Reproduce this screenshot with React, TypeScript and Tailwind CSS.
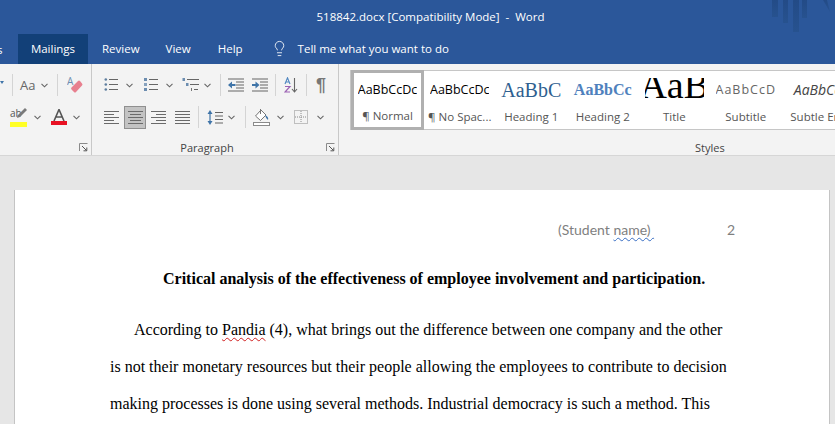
import { Lightbulb } from 'lucide-react';

const ui = "font-['Open_Sans','Noto_Sans',sans-serif]";

function Chev({ className = '' }: { className?: string }) {
  return (
    <svg width="7" height="5" viewBox="0 0 7 5" className={className}>
      <path d="M0.5 0.8 L3.5 3.8 L6.5 0.8" fill="none" stroke="#666" strokeWidth="1.1" />
    </svg>
  );
}

function Sep({ className = '' }: { className?: string }) {
  return <div className={`h-[22px] w-px bg-[#d4d4d4] ${className}`} />;
}

function Launcher({ className = '' }: { className?: string }) {
  return (
    <svg width="9" height="9" viewBox="0 0 9 9" className={className}>
      <path d="M0.5 8 V0.5 H8.5" fill="none" stroke="#8a8a8a" />
      <path d="M3 3 L7.5 7.5 M7.8 4.5 V7.8 H4.5" fill="none" stroke="#555" />
    </svg>
  );
}

function Lines({ rows }: { rows: [number, number][] }) {
  return (
    <svg width="15" height="14" viewBox="0 0 15 14">
      {rows.map(([x, w], i) => (
        <rect key={i} x={x} y={1 + i * 3} width={w} height="1" fill="#6a6a6a" />
      ))}
    </svg>
  );
}

function Bullets() {
  return (
    <svg width="14" height="14" viewBox="0 0 14 14">
      {[1.5, 6.5, 11.5].map((y) => (
        <g key={y}>
          <circle cx="1.8" cy={y} r="1.3" fill="#5f7f9f" />
          <rect x="5" y={y - 0.5} width="9" height="1" fill="#666" />
        </g>
      ))}
    </svg>
  );
}

function Numbering() {
  return (
    <svg width="15" height="14" viewBox="0 0 15 14">
      {[1.5, 6.5, 11.5].map((y, i) => (
        <g key={y}>
          <rect x="1" y={y - 1.5} width="3" height="3" fill="#6c8db0" opacity={i === 1 ? 0.8 : 1} />
          <rect x="6" y={y - 0.5} width="9" height="1" fill="#666" />
        </g>
      ))}
    </svg>
  );
}

function Multilevel() {
  return (
    <svg width="17" height="14" viewBox="0 0 17 14">
      <rect x="0.5" y="0" width="2.5" height="3" fill="#6c8db0" />
      <rect x="5" y="1" width="12" height="1" fill="#666" />
      <rect x="4" y="5" width="2.5" height="3" fill="#6c8db0" />
      <rect x="8" y="6" width="9" height="1" fill="#666" />
      <rect x="9" y="10" width="1" height="3" fill="#777" />
      <rect x="12" y="11" width="4" height="1" fill="#666" />
    </svg>
  );
}

function IndentIcon({ flip }: { flip?: boolean }) {
  return (
    <svg width="16" height="14" viewBox="0 0 16 14">
      {[0, 3, 6, 9, 12].map((y, i) => (
        <rect key={y} x={i === 0 || i === 4 ? 0 : 8} y={y + 0.5} width={i === 0 || i === 4 ? 16 : 8} height="1" fill="#666" />
      ))}
      {flip ? (
        <path d="M0 6 H3.5 V3.5 L7.5 7 L3.5 10.5 V8 H0 Z" fill="#3f74a8" />
      ) : (
        <path d="M7.5 6 H4 V3.5 L0 7 L4 10.5 V8 H7.5 Z" fill="#3f74a8" />
      )}
    </svg>
  );
}

function SortIcon() {
  return (
    <svg width="14" height="16" viewBox="0 0 14 16">
      <path d="M1 7 L3.5 0.8 L6 7 M2 5 H5" fill="none" stroke="#4f86c0" strokeWidth="1.1" />
      <path d="M1 9.5 H6 L1 15 H6" fill="none" stroke="#9c62b3" strokeWidth="1.2" />
      <path d="M10.5 1 V14.5 M8 12 L10.5 15 L13 12" fill="none" stroke="#666" strokeWidth="1.1" />
    </svg>
  );
}

function LineSpacing() {
  return (
    <svg width="16" height="17" viewBox="0 0 16 17">
      <path d="M3 1 L0.5 5 H5.5 Z M3 16 L0.5 12 H5.5 Z" fill="#3f74a8" />
      <rect x="2.4" y="4" width="1.2" height="9" fill="#3f74a8" />
      {[3, 6.5, 10, 13.5].map((y) => (
        <rect key={y} x="8" y={y} width="8" height="1" fill="#666" />
      ))}
    </svg>
  );
}

function Shading() {
  return (
    <svg width="17" height="17" viewBox="0 0 17 17">
      <path d="M8 1 L13 6 L7.5 11.5 L2.5 7 Z" fill="#fff" stroke="#777" />
      <path d="M7.5 0 V5" stroke="#777" />
      <path d="M12 6 Q16 8 15 11 Q13 10 12 6 Z" fill="#3f74a8" />
      <rect x="0.5" y="13.5" width="16" height="3" fill="#fff" stroke="#8a8a8a" />
    </svg>
  );
}

function Borders() {
  return (
    <svg width="14" height="14" viewBox="0 0 14 14">
      <rect x="0.5" y="0.5" width="13" height="13" fill="none" stroke="#8a8a8a" strokeDasharray="1 1" />
      <path d="M7 1 V13 M1 7 H13" stroke="#8a8a8a" strokeDasharray="1 1" />
    </svg>
  );
}

function Eraser() {
  return (
    <svg width="16" height="18" viewBox="0 0 16 18">
      <text x="0" y="9" fontSize="10" fill="#6c8db0" fontFamily="Open Sans">A</text>
      <path d="M4 12 L11 5 Q12 4 13 5 L15 7.5 Q16 8.5 15 9.5 L9 16 Q8 17 7 16 L4.5 13.5 Z" fill="#e8808f" />
    </svg>
  );
}

function Highlighter() {
  return (
    <div className="relative h-[22px] w-[18px]">
      <span className={`absolute left-0 top-[2px] text-[10px] leading-none text-[#555] ${ui}`}>ab</span>
      <svg width="12" height="12" viewBox="0 0 12 12" className="absolute left-[6px] top-[1px]">
        <path d="M1 11 L2 8 L9 1 L11 3 L4 10 Z" fill="#7a7a7a" />
      </svg>
      <div className="absolute bottom-[1px] left-0 h-[5px] w-[17px] bg-[#ffff26]" />
    </div>
  );
}

function FontColor() {
  return (
    <div className="flex h-[22px] w-4 flex-col items-center">
      <svg width="12" height="12" viewBox="0 0 12 12" className="mt-[3px]">
        <path d="M1 12 L6 0.5 L11 12 M3 8 H9" fill="none" stroke="#555" strokeWidth="1.6" />
      </svg>
      <div className="h-[4px] w-4 bg-[#e81123]" />
    </div>
  );
}

function FontGroup() {
  return (
    <div className="relative h-full w-[92px] shrink-0 overflow-hidden border-r border-[#c8c8c8]">
      <div className="flex h-[38px] items-center pt-[4px]">
        <svg width="4" height="3" viewBox="0 0 4 3" className="mb-[6px]">
          <path d="M0 0 H4 L2 3 Z" fill="#3f74a8" />
        </svg>
        <Sep className="ml-[8px]" />
        <span className={`ml-[7px] text-[13px] leading-none text-[#666] ${ui}`}>Aa</span>
        <Chev className="ml-[6px]" />
        <Sep className="ml-[9px]" />
        <div className="ml-[9px]">
          <Eraser />
        </div>
      </div>
      <div className="flex h-[28px] items-center pl-[10px] pt-[2px]">
        <Highlighter />
        <Chev className="ml-[6px]" />
        <div className="ml-[10px]">
          <FontColor />
        </div>
        <Chev className="ml-[6px]" />
      </div>
      <Launcher className="absolute bottom-[3px] right-[3px]" />
    </div>
  );
}

function ParagraphGroup() {
  return (
    <div className="relative flex h-full w-[247px] shrink-0 flex-col border-r border-[#c8c8c8] pl-[12px]">
      <div className="flex h-[38px] items-center pt-[4px]">
        <Bullets />
        <Chev className="ml-[8px]" />
        <div className="ml-[10px]">
          <Numbering />
        </div>
        <Chev className="ml-[8px]" />
        <div className="ml-[9px]">
          <Multilevel />
        </div>
        <Chev className="ml-[5px]" />
        <Sep className="ml-[9px]" />
        <div className="ml-[7px]">
          <IndentIcon />
        </div>
        <div className="ml-[8px]">
          <IndentIcon flip />
        </div>
        <Sep className="ml-[7px]" />
        <div className="ml-[8px]">
          <SortIcon />
        </div>
        <Sep className="ml-[8px]" />
        <span className="ml-[9px] text-[18px] font-bold leading-none text-[#777] font-['Liberation_Sans',sans-serif]">¶</span>
      </div>
      <div className="flex h-[28px] items-center pt-[2px]">
        <Lines rows={[[0, 15], [0, 10], [0, 15], [0, 10], [0, 15]]} />
        <div className="ml-[5px] flex h-[23px] w-[22px] items-center justify-center border border-[#8f8f8f] bg-[#c3c3c3]">
          <Lines rows={[[0, 15], [2, 11], [0, 15], [2, 11], [0, 15]]} />
        </div>
        <div className="ml-[5px]">
          <Lines rows={[[0, 15], [5, 10], [0, 15], [5, 10], [0, 15]]} />
        </div>
        <div className="ml-[9px]">
          <Lines rows={[[0, 15], [0, 15], [0, 15], [0, 15], [0, 15]]} />
        </div>
        <Sep className="ml-[8px]" />
        <div className="ml-[8px]">
          <LineSpacing />
        </div>
        <Chev className="ml-[5px]" />
        <Sep className="ml-[10px]" />
        <div className="ml-[7px]">
          <Shading />
        </div>
        <Chev className="ml-[7px]" />
        <div className="ml-[10px]">
          <Borders />
        </div>
        <Chev className="ml-[9px]" />
      </div>
      <div className={`mt-[11px] pr-[28px] text-center text-[11px] leading-[14px] text-[#444] ${ui}`}>Paragraph</div>
      <Launcher className="absolute bottom-[3px] right-[3px]" />
    </div>
  );
}

const styles = [
  { preview: 'AaBbCcDc', box: 'h-[38px] w-[59px]', cls: "text-[12.5px] text-black font-['Open_Sans',sans-serif]", label: '¶ No Spac...' },
  { preview: 'AaBbC', box: 'h-[38px] w-[60px]', cls: "text-[20px] text-[#2f5f90] font-['Liberation_Serif',serif]", label: 'Heading 1' },
  { preview: 'AaBbCc', box: 'h-[38px] w-[60px]', cls: "text-[16px] font-bold text-[#4f81bd] font-['Liberation_Serif',serif]", label: 'Heading 2' },
  { preview: 'AaB', box: 'mt-[7px] h-[31px] w-[59px] pb-[17px]', cls: "text-[38px] text-black font-['Liberation_Serif',serif]", label: 'Title' },
  { preview: 'AaBbCcD', box: 'h-[38px] w-[59px]', cls: "text-[12.5px] tracking-[1px] text-[#666] font-['Open_Sans',sans-serif]", label: 'Subtitle' },
  { preview: 'AaBbCc', box: 'h-[38px] w-[60px]', cls: "text-[14px] italic text-[#444] font-['Open_Sans',sans-serif]", label: 'Subtle Em' },
];

function StylesGroup() {
  return (
    <div className="relative h-full min-w-0 flex-1 pl-[11px] pt-[6px]">
      <div className="flex h-[60px] border border-r-0 border-[#c6c6c6] bg-white">
        <div className="flex h-[60px] w-[73px] shrink-0 -translate-y-px flex-col items-center overflow-hidden border-[3px] border-[#b0b0b0] bg-white">
          <div className={`flex h-[35px] w-[59px] items-center justify-center overflow-hidden whitespace-nowrap text-[12.5px] text-black ${ui}`}>AaBbCcDc</div>
          <div className={`whitespace-nowrap text-[11.5px] leading-[16px] text-[#555] ${ui}`}>¶ Normal</div>
        </div>
        {styles.map((s) => (
          <div key={s.label} className="flex w-[71.5px] shrink-0 flex-col items-center">
            <div className={`flex items-center justify-center overflow-hidden whitespace-nowrap leading-none ${s.box} ${s.cls}`}>{s.preview}</div>
            <div className={`whitespace-nowrap text-[11.5px] leading-[16px] text-[#555] ${ui}`}>{s.label}</div>
          </div>
        ))}
      </div>
      <div className={`mt-[11px] pl-[345px] text-[11px] leading-[14px] text-[#444] ${ui}`}>Styles</div>
    </div>
  );
}

export default function App() {
  return (
    <div className="flex h-[424px] w-[835px] flex-col overflow-hidden bg-[#e6e6e6]">
      <header className="relative flex h-[34px] shrink-0 items-center justify-center bg-[#2b579a] pl-[26px]">
        <span className={`text-[11.5px] text-white ${ui}`}>518842.docx [Compatibility Mode]&nbsp; -&nbsp; Word</span>
        <svg width="60" height="34" viewBox="0 0 60 34" className="absolute left-[772px] top-0">
          <defs>
            <linearGradient id="fade" x1="0" y1="0" x2="0" y2="1">
              <stop offset="0" stopColor="#234b87" />
              <stop offset="1" stopColor="#27528f" />
            </linearGradient>
          </defs>
          <rect x="0" y="0" width="6" height="17" fill="url(#fade)" />
          <rect x="11" y="0" width="5" height="23" fill="url(#fade)" />
          <rect x="21" y="0" width="6" height="32" fill="url(#fade)" />
          <rect x="30" y="0" width="5" height="18" fill="url(#fade)" />
          <path d="M51 0 H55 L58 12 Z" fill="url(#fade)" />
        </svg>
      </header>
      <nav className={`flex h-[30px] shrink-0 items-stretch bg-[#2b579a] text-[11.5px] text-white ${ui}`}>
        <div className="w-[18px] overflow-hidden whitespace-nowrap pt-[7px]">
          <span className="-ml-[3px] block">s</span>
        </div>
        <div className="flex w-[70px] items-center justify-center bg-[#124078] pb-[1px]">Mailings</div>
        <div className="ml-[14px] flex items-center pb-[1px]">Review</div>
        <div className="ml-[26px] flex items-center pb-[1px]">View</div>
        <div className="ml-[27px] flex items-center pb-[1px]">Help</div>
        <div className="ml-[28px] flex items-center pb-[1px]">
          <Lightbulb size={17} strokeWidth={1.2} />
          <span className="ml-[10px]">Tell me what you want to do</span>
        </div>
      </nav>
      <section className="flex h-[92px] shrink-0 border-b border-[#d6d6d6] bg-[#f3f3f3]">
        <FontGroup />
        <ParagraphGroup />
        <StylesGroup />
      </section>
      <main className="min-h-0 flex-1 pl-[14px] pr-[5px] pt-[34px]">
        <div className="h-[300px] border-x border-[#c4c4c4] bg-white pl-[95px] pr-[102px] pt-[30px]">
          <div className="flex h-[20px] items-center whitespace-nowrap text-[14px] leading-none text-[#7f7f7f] font-['Lato',sans-serif]">
            <span className="ml-[448px]">
              (Student <span className="underline decoration-[#3a6fc4] decoration-wavy decoration-1 underline-offset-2">name)&nbsp;</span>
            </span>
            <span className="ml-[73px]">2</span>
          </div>
          <div className="text-[16px] text-black font-['Liberation_Serif',serif]">
            <p className="mt-[29px] whitespace-nowrap pl-[53px] font-bold leading-[20px]">Critical analysis of the effectiveness of employee involvement and participation.</p>
            <p className="mt-[22px] whitespace-nowrap pl-[24px] leading-[37px]">
              According to <span className="underline decoration-[#d02020] decoration-wavy decoration-1 underline-offset-2">Pandia</span> (4), what brings out the difference between one company and the other
            </p>
            <p className="whitespace-nowrap leading-[37px]">is not their monetary resources but their people allowing the employees to contribute to decision</p>
            <p className="whitespace-nowrap leading-[37px]">making processes is done using several methods. Industrial democracy is such a method. This</p>
          </div>
        </div>
      </main>
    </div>
  );
}
